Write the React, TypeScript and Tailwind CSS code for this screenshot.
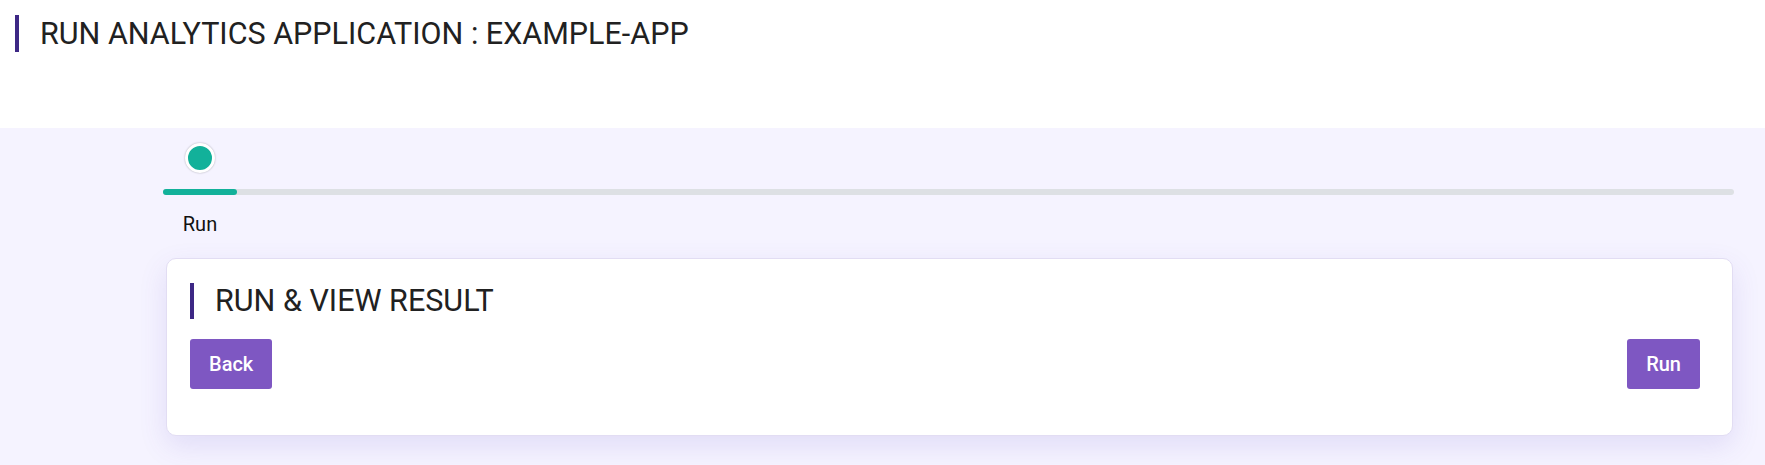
const font = { fontFamily: 'Roboto, "Liberation Sans", sans-serif' };

function Heading({ text, className }: { text: string; className?: string }) {
  return (
    <h1
      className={`border-l-4 border-[#3d2885] pl-[21px] text-[30.5px] font-normal text-[#212121] ${className ?? ""}`}
    >
      {text}
    </h1>
  );
}

function Stepper() {
  return (
    <div className="flex flex-col">
      <div className="flex w-[74px] justify-center pt-[15px]">
        <div className="h-[30px] w-[30px] rounded-full border-[3px] border-white bg-[#12b19a] shadow-[0_0_2px_rgba(0,0,0,0.3)]" />
      </div>
      <div className="mt-4 h-[6px] w-full rounded-full bg-[#dde0e4]">
        <div className="h-full w-[74px] rounded-full bg-[#12b19a]" />
      </div>
      <div className="flex w-[74px] justify-center pt-[18px] text-[20px] leading-[23px] text-[#111]">
        Run
      </div>
    </div>
  );
}

export default function App() {
  return (
    <div className="flex min-h-screen flex-col bg-[#f5f3ff]" style={font}>
      <header className="h-[128px] bg-white pl-[15px] pt-[15px]">
        <Heading text="RUN ANALYTICS APPLICATION : EXAMPLE-APP" className="leading-[37px]" />
      </header>

      <main className="pl-[163px] pr-[31px]">
        <Stepper />

        <section className="ml-[3px] mr-[1px] mt-[22px] rounded-[10px] border border-[#e2ddf3] bg-white pb-[46px] pl-[23px] pr-[32px] pt-[24px] shadow-[0_10px_28px_rgba(90,70,190,0.13)]">
          <Heading text="RUN & VIEW RESULT" className="leading-[36px]" />
          <div className="mt-5 flex items-center justify-between">
            <button className="h-[50px] rounded-[3px] bg-[#7e57c2] px-[19px] text-[20px] font-medium text-white">
              Back
            </button>
            <button className="h-[50px] rounded-[3px] bg-[#7e57c2] px-[19px] text-[20px] font-medium text-white">
              Run
            </button>
          </div>
        </section>
      </main>
    </div>
  );
}
